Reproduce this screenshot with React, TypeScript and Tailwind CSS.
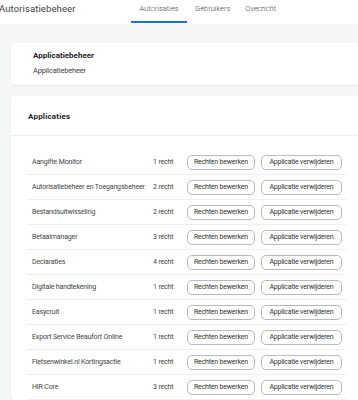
const apps = [
  { name: "Aangifte Monitor", count: 1 },
  { name: "Autorisatiebeheer en Toegangsbeheer", count: 2 },
  { name: "Bestandsuitwisseling", count: 2 },
  { name: "Betaalmanager", count: 3 },
  { name: "Declaraties", count: 4 },
  { name: "Digitale handtekening", count: 1 },
  { name: "Easycruit", count: 1 },
  { name: "Export Service Beaufort Online", count: 1 },
  { name: "Fietsenwinkel.nl Kortingsactie", count: 1 },
  { name: "HIR Core", count: 3 },
];

function RowButton({ label, width }: { label: string; width: string }) {
  return (
    <button
      className={`h-[15px] ${width} shrink-0 whitespace-nowrap rounded-[5px] border border-[#b9b9b9] bg-white text-[7px] leading-none tracking-[-0.2px] text-[#333]`}
    >
      {label}
    </button>
  );
}

export default function App() {
  return (
    <div
      className="h-[400px] w-[358px] overflow-hidden bg-[#f5f6f8] text-[#333]"
      style={{ fontFamily: 'Roboto, "Liberation Sans", sans-serif' }}
    >
      {/* top bar */}
      <div className="flex h-[24px] items-start bg-white">
        <div className="ml-[-1px] w-[132px] shrink-0 pt-[1px] text-[9.5px] leading-[15px] tracking-[0.1px] text-[#444]">
          Autorisatiebeheer
        </div>
        <nav className="flex items-start whitespace-nowrap text-[7.5px] font-light text-[#444]">
          <div className="flex h-[24px] w-[56px] flex-col items-center">
            <span className="pt-[3px] leading-[11px]">Autorisaties</span>
            <span className="mt-auto mb-[1px] h-[2px] w-full bg-[#1b74c9]" />
          </div>
          <span className="ml-[8px] pt-[3px] leading-[11px]">Gebruikers</span>
          <span className="ml-[15px] pt-[3px] leading-[11px]">Overzicht</span>
        </nav>
      </div>

      <div className="pl-[11px] pt-[19px]">
        {/* app card */}
        <div className="w-[360px] rounded-[4px] bg-white pl-[22px] pt-[7px] pb-[9px] shadow-[0_1px_2px_rgba(0,0,0,0.06)]">
          <div className="text-[8px] font-bold leading-[11px] text-[#222]">Applicatiebeheer</div>
          <div className="mt-[4px] text-[7.5px] leading-[11px] tracking-[-0.2px] text-[#444]">Applicatiebeheer</div>
        </div>

        {/* applicaties card */}
        <div className="mt-[11px] w-[360px] rounded-[4px] bg-white shadow-[0_1px_2px_rgba(0,0,0,0.06)]">
          <div className="flex h-[40px] items-center border-b border-[#eef0f2] pl-[17px] pt-[2px] text-[8px] font-bold tracking-[0.2px] text-[#222]">
            Applicaties
          </div>
          <div className="pl-[16px] pt-[14px]">
            {apps.map((a) => (
              <div
                key={a.name}
                className="flex h-[25px] w-[319px] items-center whitespace-nowrap border-b border-[#eeeff1] text-[7px] tracking-[-0.15px] text-[#444]"
              >
                <span className="w-[126px] shrink-0 pl-[5px]">{a.name}</span>
                <span className="w-[34px] shrink-0">{a.count} recht</span>
                <div className="flex gap-[6px]">
                  <RowButton label="Rechten bewerken" width="w-[68px]" />
                  <RowButton label="Applicatie verwijderen" width="w-[81px]" />
                </div>
              </div>
            ))}
          </div>
        </div>
      </div>
    </div>
  );
}
